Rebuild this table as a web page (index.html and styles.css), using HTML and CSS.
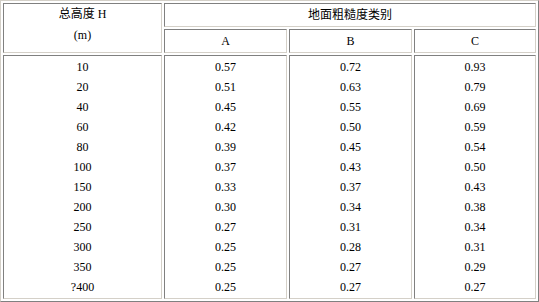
FILE: index.html
```html
<!DOCTYPE html>
<html>
<head>
<meta charset="utf-8">
<link rel="stylesheet" href="styles.css">
</head>
<body>
<table class="tbl">
  <colgroup>
    <col class="c1"><col class="c2"><col class="c2"><col class="c3">
  </colgroup>
  <tr>
    <td rowspan="2" class="hd">总高度 H<br>(m)</td>
    <td colspan="3">地面粗糙度类别</td>
  </tr>
  <tr>
    <td>A</td><td>B</td><td>C</td>
  </tr>
  <tr>
    <td>10<br>20<br>40<br>60<br>80<br>100<br>150<br>200<br>250<br>300<br>350<br>?400</td>
    <td>0.57<br>0.51<br>0.45<br>0.42<br>0.39<br>0.37<br>0.33<br>0.30<br>0.27<br>0.25<br>0.25<br>0.25</td>
    <td>0.72<br>0.63<br>0.55<br>0.50<br>0.45<br>0.43<br>0.37<br>0.34<br>0.31<br>0.28<br>0.27<br>0.27</td>
    <td>0.93<br>0.79<br>0.69<br>0.59<br>0.54<br>0.50<br>0.43<br>0.38<br>0.34<br>0.31<br>0.29<br>0.27</td>
  </tr>
</table>
</body>
</html>
```
FILE: styles.css
```css
html, body {
  margin: 0;
  padding: 0;
  background: #ffffff;
}
.tbl {
  width: 539px;
  table-layout: fixed;
  border-collapse: separate;
  border-spacing: 2px;
  border: 1px solid;
  border-color: #d4d0c8 #808080 #808080 #d4d0c8;
}
.c1 { width: 159px; }
.c2 { width: 123px; }
.c3 { width: 122px; }
.tbl td {
  border: 1px solid;
  border-color: #808080 #d4d0c8 #d4d0c8 #808080;
  padding: 1px;
  text-align: center;
  vertical-align: middle;
  line-height: 20px;
  font-size: 12px;
  font-family: "Liberation Serif", "Noto Sans CJK SC", serif;
  color: #000;
}
.tbl td.hd {
  vertical-align: top;
  padding-top: 0;
  line-height: 21px;
}
```
